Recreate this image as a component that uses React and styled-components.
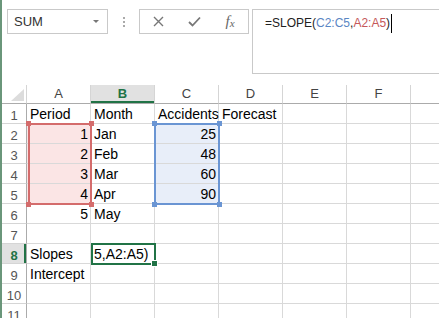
import React from 'react'
import styled, { createGlobalStyle } from 'styled-components'

const GlobalStyle = createGlobalStyle`
  html, body {
    margin: 0;
    padding: 0;
    background: #fff;
    overflow: hidden;
  }
  body {
    font-family: 'Liberation Sans', Arial, sans-serif;
  }
`

const GREEN = '#217346'

const Window = styled.div`
  width: 439px;
  height: 318px;
  overflow: hidden;
  box-sizing: border-box;
  border-left: 2px solid #6a967a;
  display: flex;
  flex-direction: column;
`

const FormulaRow = styled.div`
  display: flex;
  align-items: flex-start;
  padding: 9px 0 0 5px;
  margin-bottom: 11px;
`

const NameBox = styled.div`
  width: 101px;
  height: 25px;
  box-sizing: border-box;
  border: 1px solid #c9c9c9;
  display: flex;
  align-items: center;
  justify-content: space-between;
  padding: 0 8px 0 6px;
  font-size: 13px;
  color: #333;
`

const DropArrow = styled.span`
  width: 0;
  height: 0;
  border-left: 3px solid transparent;
  border-right: 3px solid transparent;
  border-top: 3px solid #777;
`

const Dots = styled.div`
  width: 31px;
  height: 25px;
  display: flex;
  flex-direction: column;
  align-items: center;
  justify-content: center;
  gap: 2px;

  span {
    width: 2px;
    height: 2px;
    background: #aaa;
  }
`

const ButtonsBox = styled.div`
  width: 110px;
  height: 25px;
  box-sizing: border-box;
  border: 1px solid #c9c9c9;
  display: grid;
  grid-template-columns: repeat(3, 1fr);
  align-items: center;
  justify-items: center;
  color: #777;
`

const Fx = styled.span`
  font-family: 'Liberation Serif', 'Times New Roman', serif;
  font-style: italic;
  font-size: 15px;
  color: #666;

  sub {
    font-size: 11px;
    vertical-align: -1px;
  }
`

const FormulaBox = styled.div`
  flex: 1;
  height: 65px;
  margin-left: 3px;
  margin-right: -4px;
  box-sizing: border-box;
  border: 1px solid #c9c9c9;
  padding: 4px 0 0 12px;
  font-size: 12px;
  line-height: 19px;
  color: #222;
  white-space: nowrap;
`

const Ref = styled.span`
  color: ${p => p.$color};
`

const Caret = styled.span`
  display: inline-block;
  width: 1px;
  height: 19px;
  background: #000;
  vertical-align: top;
  margin-left: 1px;
`

const Sheet = styled.div`
  display: grid;
  grid-template-columns: 25px repeat(7, 64px);
  grid-template-rows: 19px repeat(11, 20px);
`

const Corner = styled.div`
  grid-row: 1;
  grid-column: 1;
  box-sizing: border-box;
  border-right: 1px solid #d5d5d5;
  border-bottom: 1px solid #ababab;
  display: flex;
  align-items: flex-end;
  justify-content: flex-end;
  padding: 0 2px 2px 0;
`

const ColHead = styled.div`
  grid-row: 1;
  grid-column: ${p => p.$col};
  box-sizing: border-box;
  border-right: 1px solid #d5d5d5;
  border-bottom: 1px solid #ababab;
  background: ${p => (p.$active ? '#e1e1e1' : '#fff')};
  box-shadow: ${p => (p.$active ? `inset 0 -2px 0 ${GREEN}` : 'none')};
  color: ${p => (p.$active ? GREEN : '#444')};
  font-weight: ${p => (p.$active ? 700 : 400)};
  font-size: 13px;
  line-height: 18px;
  text-align: center;
`

const RowHead = styled.div`
  grid-row: ${p => p.$row};
  grid-column: 1;
  box-sizing: border-box;
  border-bottom: 1px solid #d5d5d5;
  border-right: 1px solid #ababab;
  background: ${p => (p.$active ? '#e1e1e1' : '#fff')};
  box-shadow: ${p => (p.$active ? `inset -2px 0 0 ${GREEN}` : 'none')};
  color: ${p => (p.$active ? GREEN : '#555')};
  font-weight: ${p => (p.$active ? 700 : 400)};
  font-size: 13px;
  line-height: 19px;
  padding-top: 2px;
  text-align: center;
`

const Cell = styled.div`
  grid-row: ${p => p.$row};
  grid-column: ${p => p.$col};
  box-sizing: border-box;
  border-right: 1px solid #d9d9d9;
  border-bottom: 1px solid #d9d9d9;
  background: ${p => p.$fill || '#fff'};
  font-size: 14px;
  line-height: 19px;
  padding: 1px 2px 0 3px;
  text-align: ${p => (p.$num ? 'right' : 'left')};
  white-space: nowrap;
  color: #000;
`

const RangeBox = styled.div`
  grid-row: ${p => p.$rows};
  grid-column: ${p => p.$col};
  margin: -1px -1px -1px ${p => p.$ml || '-1px'};
  border: 2px solid ${p => p.$color};
  position: relative;
  pointer-events: none;
`

const Handle = styled.span`
  position: absolute;
  width: 5px;
  height: 5px;
  background: ${p => p.$color};
  ${p => (p.$top ? 'top: -4px;' : 'bottom: -4px;')}
  ${p => (p.$left ? 'left: -4px;' : 'right: -4px;')}
`

const Selection = styled.div`
  grid-row: 9;
  grid-column: 3;
  margin: -1px -1px -1px 0;
  border: 2px solid ${GREEN};
  position: relative;

  &::after {
    content: '';
    position: absolute;
    right: -4px;
    bottom: -4px;
    width: 5px;
    height: 5px;
    background: ${GREEN};
    border: 1px solid #fff;
  }
`

// G is only partly in view; its letter sits past the window edge
const COLS = ['A', 'B', 'C', 'D', 'E', 'F', 'G']
const VISIBLE_LABELS = ['A', 'B', 'C', 'D', 'E', 'F']

const PINK = '#fbe5e5'
const BLUE = '#e8eef9'

const cells = {
  A1: { v: 'Period' },
  B1: { v: 'Month' },
  C1: { v: 'Accidents' },
  D1: { v: 'Forecast' },
  A2: { v: '1', num: true, fill: PINK },
  A3: { v: '2', num: true, fill: PINK },
  A4: { v: '3', num: true, fill: PINK },
  A5: { v: '4', num: true, fill: PINK },
  A6: { v: '5', num: true },
  B2: { v: 'Jan' },
  B3: { v: 'Feb' },
  B4: { v: 'Mar' },
  B5: { v: 'Apr' },
  B6: { v: 'May' },
  C2: { v: '25', num: true, fill: BLUE },
  C3: { v: '48', num: true, fill: BLUE },
  C4: { v: '60', num: true, fill: BLUE },
  C5: { v: '90', num: true, fill: BLUE },
  A8: { v: 'Slopes' },
  B8: { v: '5,A2:A5)' },
  A9: { v: 'Intercept' },
}

const Range = ({ col, rows, color, ml }) => (
  <RangeBox $col={col} $rows={rows} $color={color} $ml={ml}>
    <Handle $color={color} $top $left />
    <Handle $color={color} $top />
    <Handle $color={color} $left />
    <Handle $color={color} />
  </RangeBox>
)

export default function App() {
  const rows = Array.from({ length: 11 }, (_, i) => i + 1)

  return (
    <Window>
      <GlobalStyle />
      <FormulaRow>
        <NameBox>
          SUM
          <DropArrow />
        </NameBox>
        <Dots>
          <span />
          <span />
          <span />
        </Dots>
        <ButtonsBox>
          <svg width="11" height="11" viewBox="0 0 11 11">
            <path d="M1 1 L10 10 M10 1 L1 10" stroke="#777" strokeWidth="1.4" fill="none" />
          </svg>
          <svg width="13" height="11" viewBox="0 0 13 11">
            <path d="M1 6 L4.5 9.5 L12 1.5" stroke="#777" strokeWidth="1.8" fill="none" />
          </svg>
          <Fx>
            f<sub>x</sub>
          </Fx>
        </ButtonsBox>
        <FormulaBox>
          =SLOPE(<Ref $color="#5a86c4">C2:C5</Ref>,<Ref $color="#c5585a">A2:A5</Ref>)
          <Caret />
        </FormulaBox>
      </FormulaRow>

      <Sheet>
        <Corner>
          <svg width="13" height="12" viewBox="0 0 13 12">
            <polygon points="13,0 13,12 0,12" fill="#dcdcdc" />
          </svg>
        </Corner>
        {COLS.map((c, i) => (
          <ColHead key={c} $col={i + 2} $active={c === 'B'}>
            {VISIBLE_LABELS.includes(c) ? c : null}
          </ColHead>
        ))}
        {rows.map(r => (
          <React.Fragment key={r}>
            <RowHead $row={r + 1} $active={r === 8}>
              {r}
            </RowHead>
            {COLS.map((c, i) => {
              const cell = cells[c + r] || {}
              return (
                <Cell key={c} $row={r + 1} $col={i + 2} $num={cell.num} $fill={cell.fill}>
                  {cell.v}
                </Cell>
              )
            })}
          </React.Fragment>
        ))}
        <Range col={2} rows="3 / 7" color="#d46c6c" ml="1px" />
        <Range col={4} rows="3 / 7" color="#6a95d3" />
        <Selection />
      </Sheet>
    </Window>
  )
}
